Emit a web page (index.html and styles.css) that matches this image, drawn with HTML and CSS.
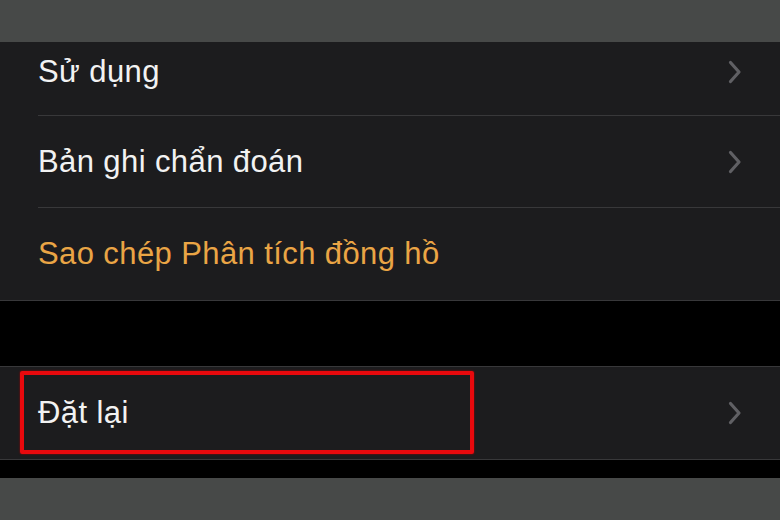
FILE: index.html
```html
<!DOCTYPE html>
<html>
<head>
<meta name="viewport" content="width=device-width, initial-scale=1">
<link rel="stylesheet" href="styles.css">
</head>
<body>

  <div class="topbar"></div>

  <div class="group first">
    <div class="row">
      <span class="label">Sử dụng</span>
      <svg class="chevron" viewBox="0 0 16 26"><path d="M3.5 3.5 L12 13 L3.5 22.5"/></svg>
    </div>
    <div class="row">
      <span class="label">Bản ghi chẩn đoán</span>
      <svg class="chevron" viewBox="0 0 16 26"><path d="M3.5 3.5 L12 13 L3.5 22.5"/></svg>
    </div>
    <div class="row">
      <span class="label orange">Sao chép Phân tích đồng hồ</span>
    </div>
  </div>

  <div class="gap"></div>

  <div class="group">
    <div class="row">
      <span class="label">Đặt lại</span>
      <svg class="chevron" viewBox="0 0 16 26"><path d="M3.5 3.5 L12 13 L3.5 22.5"/></svg>
      <div class="highlight"></div>
    </div>
  </div>

  <div class="gap small"></div>

  <div class="bottombar"></div>

</body>
</html>
```

FILE: styles.css
```css
body {
  margin: 0;
  font-family: "Liberation Sans", Arial, Helvetica, sans-serif;
  background-color: #000;
}

* {
  box-sizing: border-box;
}

.topbar {
  height: 42px;
  background-color: #474948;
}

.bottombar {
  height: 42px;
  background-color: #474948;
}

.group {
  background-color: #1c1c1e;
  border-top: 1px solid #38383a;
  border-bottom: 1px solid #38383a;
}

.group.first {
  border-top: none;
}

.row {
  position: relative;
  display: flex;
  align-items: center;
  justify-content: space-between;
  height: 92px;
  margin-left: 38px;
  padding-right: 37px;
  border-bottom: 1px solid #38383a;
}

.row:last-child {
  border-bottom: none;
}

.group.first .row:first-child {
  height: 74px;
  padding-bottom: 14px;
}

.label {
  font-size: 31px;
  letter-spacing: 0.4px;
  color: #f2f2f2;
}

.label.orange {
  color: #eaa545;
}

.chevron {
  width: 16px;
  height: 26px;
  fill: none;
  stroke: #606064;
  stroke-width: 3.2;
  stroke-linecap: round;
  stroke-linejoin: round;
}

.gap {
  height: 65px;
}

.gap.small {
  height: 18px;
}

/* red annotation box over the reset row */
.highlight {
  position: absolute;
  left: -18px;
  top: 4px;
  width: 454px;
  height: 83px;
  border: 4px solid #e8090d;
  border-radius: 2px;
  box-shadow: 0 0 2px #a00;
}
```
